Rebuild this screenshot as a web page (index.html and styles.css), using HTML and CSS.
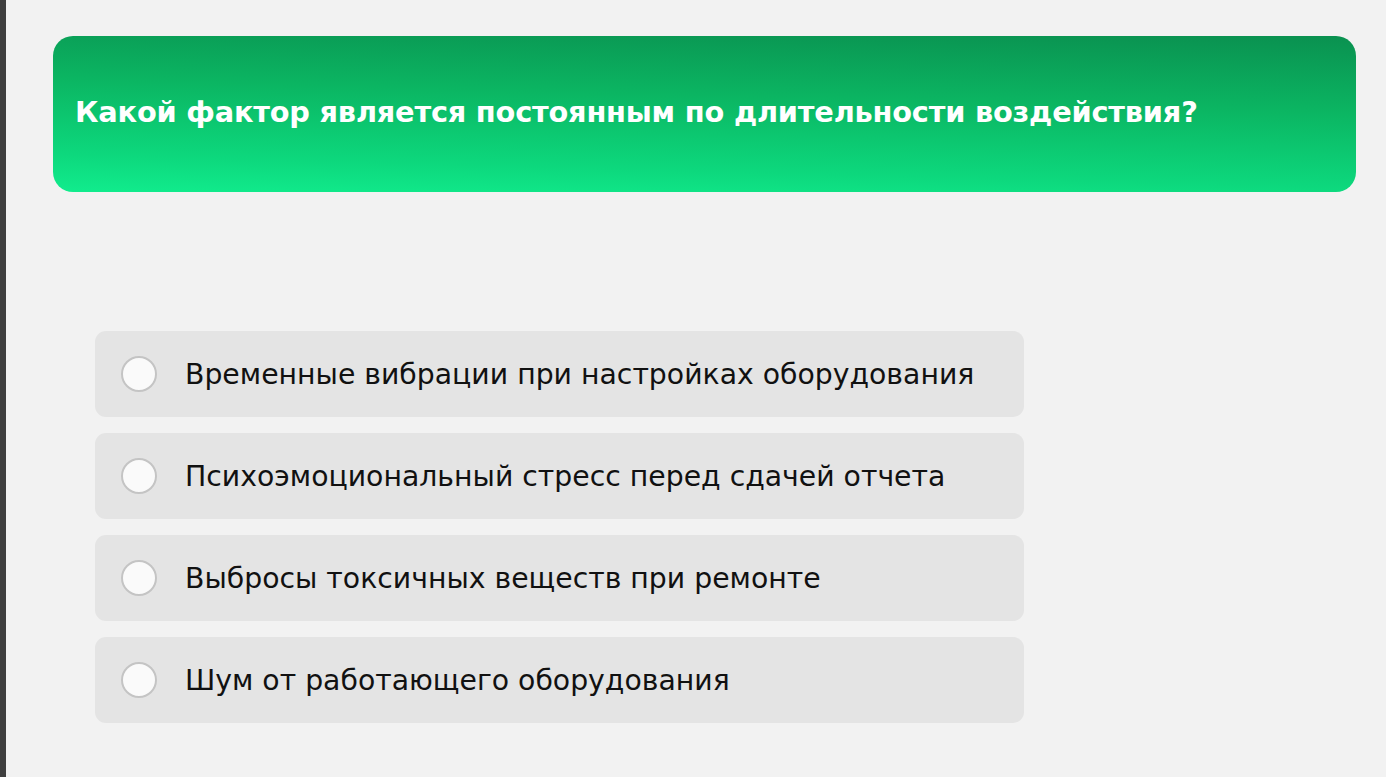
FILE: index.html
```html
<!DOCTYPE html>
<html lang="ru">
<head>
    <meta charset="UTF-8">
    <meta name="viewport" content="width=device-width, initial-scale=1.0">
    <title>Тест</title>
    <link rel="stylesheet" href="styles.css">
</head>
<body>
    <div class="page">
        <div class="question">
            <h2>Какой фактор является постоянным по длительности воздействия?</h2>
        </div>

        <form class="answers">
            <label class="answer">
                <input type="radio" name="answer" value="1">
                <span class="radio"></span>
                <span class="text">Временные вибрации при настройках оборудования</span>
            </label>
            <label class="answer">
                <input type="radio" name="answer" value="2">
                <span class="radio"></span>
                <span class="text">Психоэмоциональный стресс перед сдачей отчета</span>
            </label>
            <label class="answer">
                <input type="radio" name="answer" value="3">
                <span class="radio"></span>
                <span class="text">Выбросы токсичных веществ при ремонте</span>
            </label>
            <label class="answer">
                <input type="radio" name="answer" value="4">
                <span class="radio"></span>
                <span class="text">Шум от работающего оборудования</span>
            </label>
        </form>
    </div>
</body>
</html>
```

FILE: styles.css
```css
html, body { height: 100%; }
body { margin: 0; background-color: #f2f2f2; font-family: "DejaVu Sans", "Liberation Sans", sans-serif; border-left: 6px solid #3f3f3f; box-sizing: border-box; }
.page { padding: 36px 30px 0 47px; }

.question { height: 156px; box-sizing: border-box; padding: 0 22px 4px; display: flex; align-items: center; border-radius: 20px; background: linear-gradient(181.5deg, #0a9150 0%, #0bb562 40%, #0dd87d 80%, #11ec8d 100%); }
.question h2 { margin: 0; color: #fff; font-size: 28.8px; font-weight: bold; letter-spacing: -0.2px; }

.answers { margin: 139px 0 0 42px; width: 929px; display: flex; flex-direction: column; gap: 16px; }
.answer { height: 86px; display: flex; align-items: center; padding-left: 26px; background-color: #e4e4e4; border-radius: 11px; cursor: pointer; }
.answer input { display: none; }
.radio { width: 32px; height: 32px; flex-shrink: 0; border: 2px solid #c4c4c4; border-radius: 50%; background-color: #fafafa; }
.answer input:checked + .radio { border-color: #0cb864; box-shadow: inset 0 0 0 7px #fafafa; background-color: #0cb864; }
.text { margin-left: 28px; font-size: 28.3px; color: #111; }
```
